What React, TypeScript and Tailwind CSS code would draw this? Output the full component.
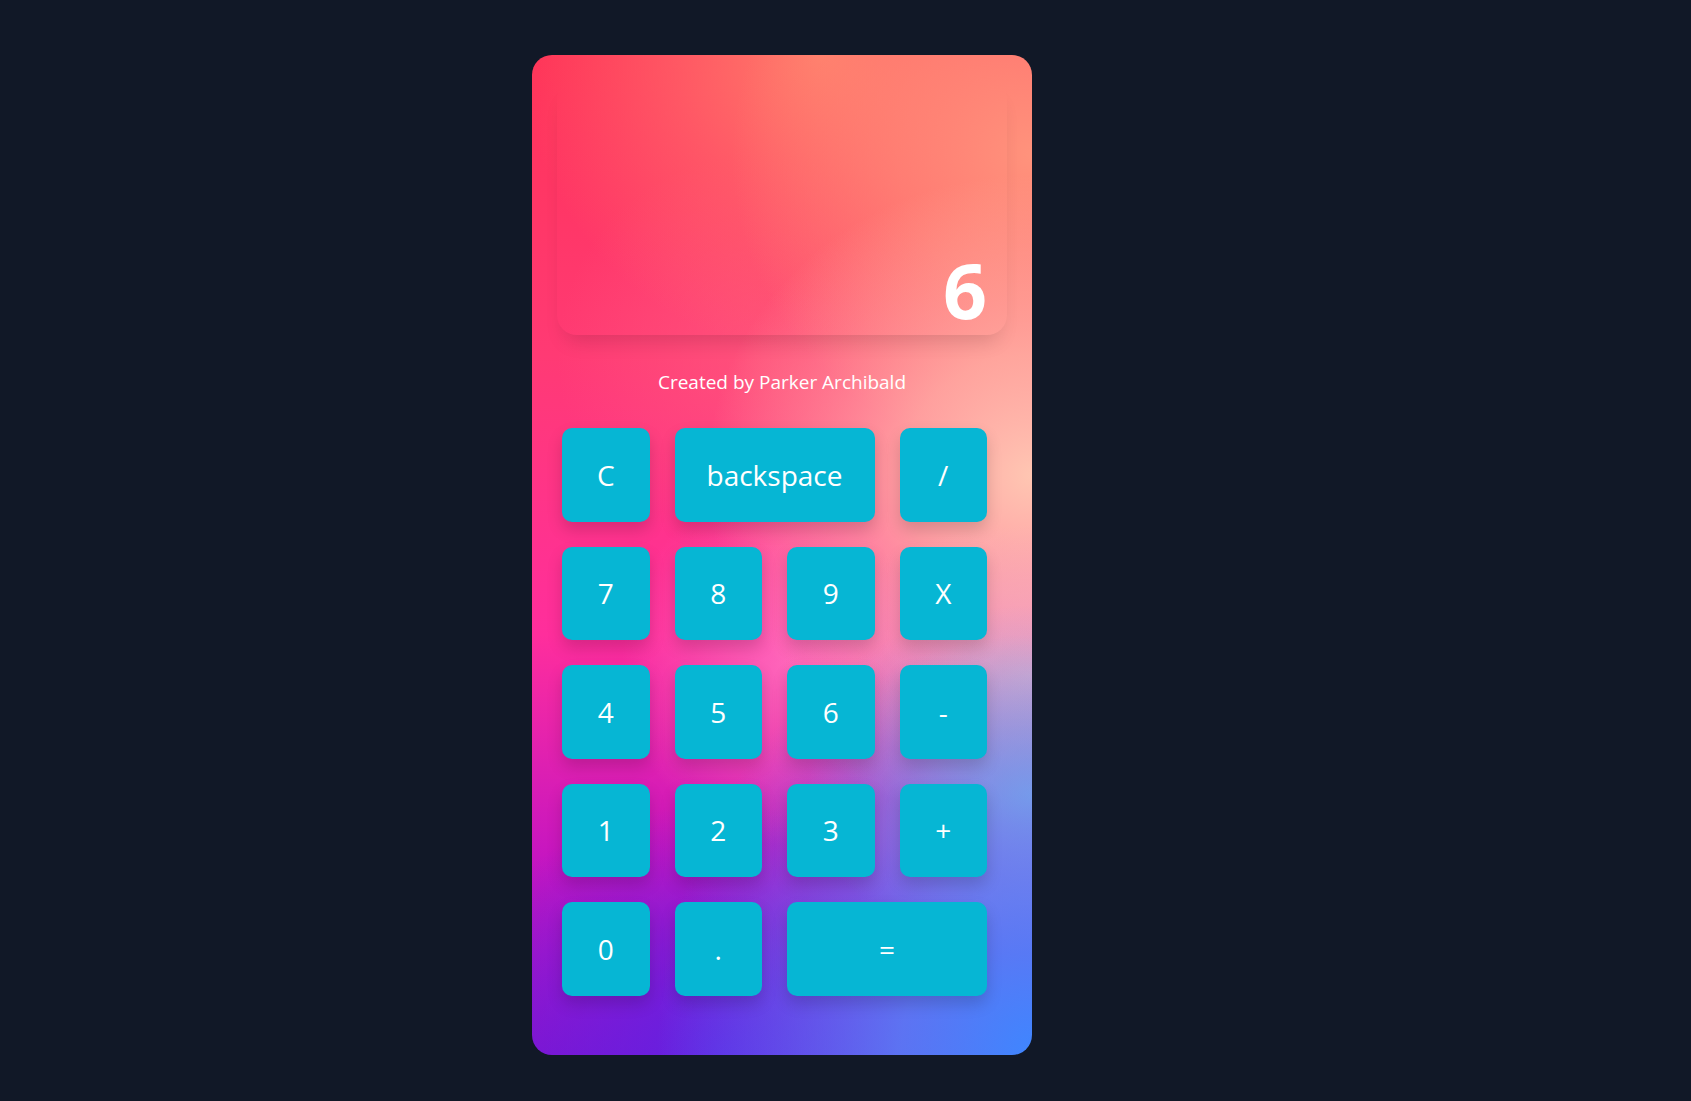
const KEYS = [
  { id: "clear", label: "C", wide: false },
  { id: "back", label: "backspace", wide: true },
  { id: "div", label: "/", wide: false },
  { id: "k7", label: "7", wide: false },
  { id: "k8", label: "8", wide: false },
  { id: "k9", label: "9", wide: false },
  { id: "mul", label: "X", wide: false },
  { id: "k4", label: "4", wide: false },
  { id: "k5", label: "5", wide: false },
  { id: "k6", label: "6", wide: false },
  { id: "sub", label: "-", wide: false },
  { id: "k1", label: "1", wide: false },
  { id: "k2", label: "2", wide: false },
  { id: "k3", label: "3", wide: false },
  { id: "add", label: "+", wide: false },
  { id: "k0", label: "0", wide: false },
  { id: "dot", label: ".", wide: false },
  { id: "eq", label: "=", wide: true },
];

export default function App() {
  return (
    <div
      className="min-h-screen bg-[#111827] pl-[532px] pt-[55px] pb-[46px]"
      style={{ fontFamily: '"Open Sans", "Noto Sans", sans-serif' }}
    >
      {/* ── Calculator card ───────────────────────────────── */}
      <div className="w-[500px] h-[1000px] rounded-[20px] overflow-hidden flex flex-col pt-[25px] bg-[radial-gradient(ellipse_75%_45%_at_100%_100%,#3f86ff_0%,rgba(84,138,250,0.8)_35%,rgba(140,170,225,0)_100%),radial-gradient(ellipse_45%_16%_at_100%_74%,rgba(150,178,220,0.95)_0%,rgba(150,178,220,0)_100%),radial-gradient(ellipse_50%_15%_at_100%_62%,rgba(240,176,200,0.9)_0%,rgba(240,176,200,0)_100%),radial-gradient(ellipse_65%_30%_at_100%_42%,#ffc6b2_0%,rgba(255,190,170,0.75)_40%,rgba(255,190,170,0)_100%),radial-gradient(ellipse_60%_30%_at_100%_10%,#ff937c_0%,rgba(255,140,120,0.7)_45%,rgba(255,140,120,0)_100%),radial-gradient(ellipse_60%_30%_at_58%_0%,#ff7d6a_0%,rgba(255,110,106,0.6)_50%,rgba(255,110,106,0)_100%),radial-gradient(ellipse_40%_20%_at_45%_30%,rgba(255,96,128,0.6)_0%,rgba(255,96,128,0)_100%),radial-gradient(ellipse_32%_18%_at_50%_61%,rgba(255,110,190,0.85)_0%,rgba(255,110,190,0)_100%),radial-gradient(ellipse_60%_25%_at_38%_100%,#6222e2_0%,rgba(98,34,226,0)_100%),linear-gradient(180deg,#ff3358_0%,#ff3a74_30%,#ff2e9c_58%,#c716c0_80%,#8a10cc_100%)]">
        {/* Display */}
        <div className="mx-[25px] h-[255px] rounded-[20px] shadow-[0_14px_20px_-8px_rgba(0,0,0,0.14)] flex items-end justify-end pr-[20px] pb-[7px]">
          <span className="text-white font-bold text-[77px] leading-none">6</span>
        </div>

        {/* Credit */}
        <p className="mt-[34px] text-center text-white text-[19px] leading-[26px]">
          Created by Parker Archibald
        </p>

        {/* Keypad */}
        <div className="ml-[30px] mt-[33px] w-[425px] grid grid-cols-4 auto-rows-[93.5px] gap-[25px]">
          {KEYS.map(({ id, label, wide }) => (
            <button
              key={id}
              type="button"
              className={`${wide ? "col-span-2" : ""} rounded-[10px] bg-[#06b6d4] text-white text-[28px] flex items-center justify-center shadow-[0_8px_16px_rgba(0,0,0,0.16)]`}
            >
              {label}
            </button>
          ))}
        </div>
      </div>
    </div>
  );
}
